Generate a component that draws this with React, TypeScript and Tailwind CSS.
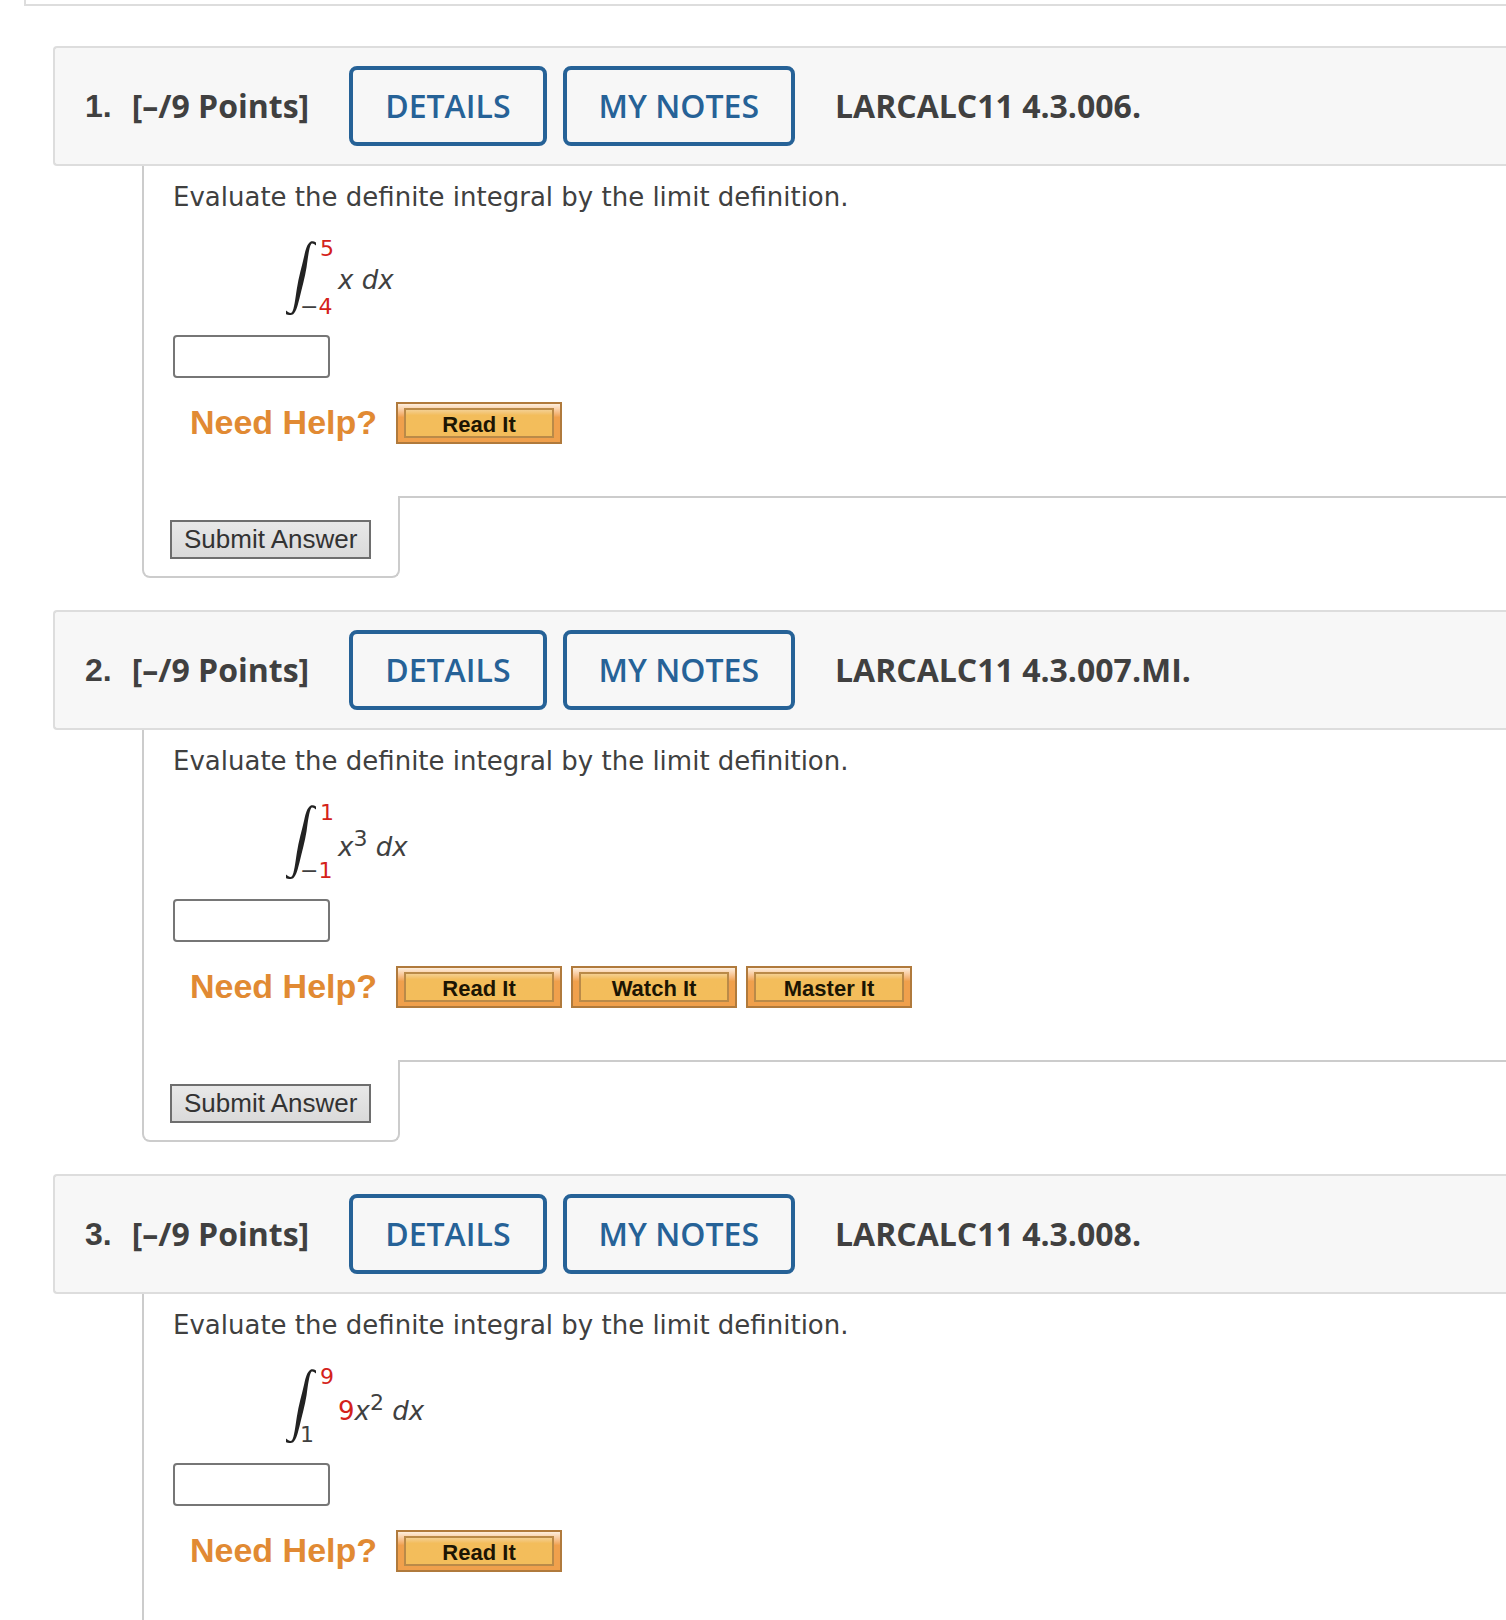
import React from 'react';

interface Problem {
  number: number;
  code: string;
  upper: React.ReactNode;
  lower: React.ReactNode;
  integrand: React.ReactNode;
  help: string[];
  canSubmit: boolean;
}

const red = (text: string) => <span className="text-[#d4221a]">{text}</span>;

const problems: Problem[] = [
  {
    number: 1,
    code: 'LARCALC11 4.3.006.',
    upper: red('5'),
    lower: <>−{red('4')}</>,
    integrand: <i>x dx</i>,
    help: ['Read It'],
    canSubmit: true,
  },
  {
    number: 2,
    code: 'LARCALC11 4.3.007.MI.',
    upper: red('1'),
    lower: <>−{red('1')}</>,
    integrand: (
      <>
        <i>x</i>
        <Power>3</Power> <i>dx</i>
      </>
    ),
    help: ['Read It', 'Watch It', 'Master It'],
    canSubmit: true,
  },
  {
    number: 3,
    code: 'LARCALC11 4.3.008.',
    upper: red('9'),
    lower: '1',
    integrand: (
      <>
        {red('9')}
        <i>x</i>
        <Power>2</Power> <i>dx</i>
      </>
    ),
    help: ['Read It'],
    canSubmit: false,
  },
];

function Power({ children }: { children: React.ReactNode }) {
  return <sup className="top-0 align-super text-[22px] leading-9">{children}</sup>;
}

function IntegralSign() {
  return (
    <svg width="30" height="74" viewBox="0 0 30 74" aria-hidden="true" className="shrink-0">
      <path
        d="M30 1.4 C28 0.2 26 0 24.4 0.8 C21.2 3 19.8 8 18.2 15 C16 25 12.6 36 10.8 48 C9.2 58 8.2 68 6 71.2 C4.4 72.8 2.6 71.4 0 69.4 L0 73.2 C2.6 74.2 5 74.4 7.2 73.2 C10.4 70.6 11.8 64 13.6 57 C16.2 46 18.8 37 20.6 26 C22 16 23.2 6 25.2 3 C26.4 2 28 2.8 30 4.6 Z"
        fill="#222"
      />
    </svg>
  );
}

function HelpButton({ label }: { label: string }) {
  return (
    <button
      type="button"
      className="h-[42px] w-[166px] border-2 border-[#b07a3c] bg-linear-to-b from-[#fdeedd] to-[#f0a04c] to-35% px-1.5 py-1"
    >
      <span className="flex h-full items-center justify-center border-2 border-[#ba8a48] bg-linear-to-b from-[#f4cf90] to-[#f3bd5b] to-20% pt-1 font-['Liberation_Sans',sans-serif] text-[22px] leading-none font-bold text-[#1c1503]">
        {label}
      </span>
    </button>
  );
}

function HeaderLink({ label }: { label: string }) {
  return (
    <a
      href="#"
      className="flex h-20 items-center rounded-lg border-4 border-[#266297] px-8 text-[32px] font-semibold whitespace-nowrap text-[#266297]"
    >
      {label}
    </a>
  );
}

function Question({ problem }: { problem: Problem }) {
  const inputId = `answer-${problem.number}`;

  return (
    <section className="mb-8">
      <header className="flex h-[120px] items-center rounded-l border-2 border-r-0 border-[#ddd] bg-[#f7f7f7] pl-[30px] font-['Open_Sans',sans-serif] text-[32px] font-bold">
        <h2 className="flex items-center gap-5 whitespace-nowrap">
          <span className="font-['Liberation_Sans',sans-serif]">{problem.number}.</span>
          <span>[–/9 Points]</span>
        </h2>
        <nav className="mx-10 flex gap-4">
          <HeaderLink label="DETAILS" />
          <HeaderLink label="MY NOTES" />
        </nav>
        <span className="whitespace-nowrap">{problem.code}</span>
      </header>

      <div className="ml-[89px]">
        <div className="h-[330px] border-l-2 border-[#ccc] pt-3 pl-[29px]">
          <label htmlFor={inputId} className="block text-[26px] leading-[38px]">
            Evaluate the definite integral by the limit definition.
          </label>
          <div className="mt-[25px] ml-[113px] flex h-[74px] items-center">
            <IntegralSign />
            <div className="flex h-full w-[22px] flex-col justify-between text-[22px] leading-4 whitespace-nowrap">
              <span className="pl-1">{problem.upper}</span>
              <span className="-ml-4">{problem.lower}</span>
            </div>
            <span className="pt-1 text-[26px]">{problem.integrand}</span>
          </div>
          <input
            id={inputId}
            type="text"
            className="mt-5 block h-[43px] w-[157px] rounded border-2 border-[#767676] px-2 text-[26px]"
          />
          <div className="mt-6 ml-[17px] flex items-center gap-[9px]">
            <span className="mr-2.5 pb-0.5 font-['Liberation_Sans',sans-serif] text-[34px] leading-10 font-bold text-[#e18a33]">
              Need Help?
            </span>
            {problem.help.map(label => (
              <HelpButton key={label} label={label} />
            ))}
          </div>
        </div>

        {/* Submit tab hanging below the question body */}
        {problem.canSubmit && (
          <div className="flex">
            <div className="h-[82px] w-[258px] shrink-0 rounded-b-lg border-2 border-t-0 border-[#ccc] pt-6 pl-[26px]">
              <button
                type="submit"
                className="flex h-[39px] items-center border-2 border-[#6e6e6e] bg-linear-to-b from-[#e8e8e8] to-[#dadada] px-3 pb-0.5 font-['Liberation_Sans',sans-serif] text-[26px] leading-none whitespace-nowrap text-[#333]"
              >
                Submit Answer
              </button>
            </div>
            <div className="flex-1 border-t-2 border-[#ccc]" />
          </div>
        )}
      </div>
    </section>
  );
}

export default function App() {
  return (
    <main className="h-screen overflow-hidden bg-white font-['DejaVu_Sans',sans-serif] text-[#404040]">
      <div className="ml-6 h-[6px] border-b-2 border-l-2 border-[#ddd]" />
      <div className="mt-10 ml-[53px]">
        {problems.map(problem => (
          <Question key={problem.number} problem={problem} />
        ))}
      </div>
    </main>
  );
}
